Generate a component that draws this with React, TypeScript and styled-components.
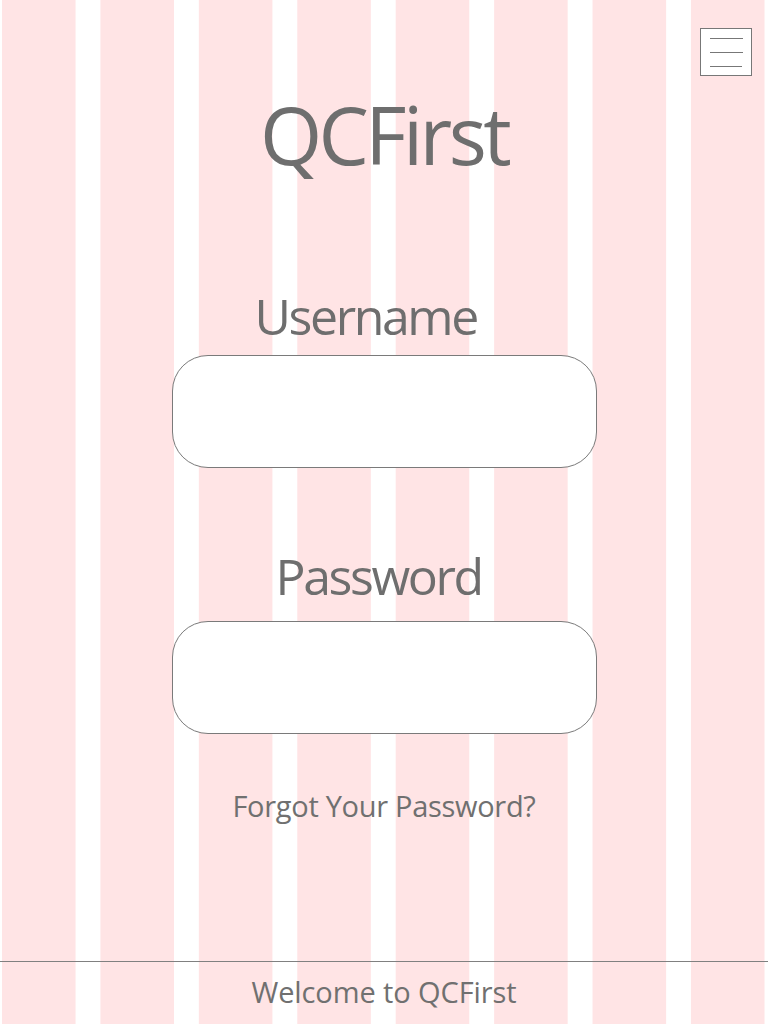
import React from "react";
import styled, { createGlobalStyle } from "styled-components";

const GlobalStyle = createGlobalStyle`
  html, body { margin: 0; padding: 0; }
  body { font-family: "Open Sans", "Noto Sans", sans-serif; color: #707070; }
  * { box-sizing: border-box; }
`;

const Page = styled.div`
  min-height: 1024px;
  display: flex;
  flex-direction: column;
  background-color: #ffffff;
  background-image: linear-gradient(to right, #ffe4e5 0, #ffe4e5 74px, #ffffff 74px, #ffffff 100%);
  background-size: 98.43px 100%;
  background-position: 2px 0;
  background-repeat: repeat-x;
`;

const TopBar = styled.header`
  display: flex;
  justify-content: flex-end;
  padding: 28px 16px 0 0;
`;

const MenuButton = styled.button`
  width: 52px;
  height: 48px;
  padding: 9px 8px 0 9px;
  border: 1px solid #777777;
  background: #ffffff;
  display: flex;
  flex-direction: column;
  gap: 13px;
  cursor: pointer;
`;

const MenuLine = styled.span<{ $w: number }>`
  display: block;
  width: ${(p) => p.$w}px;
  height: 1px;
  background: #777777;
`;

const Title = styled.h1`
  margin: 18px 0 0;
  font-size: 80px;
  line-height: 1;
  font-weight: 400;
  text-align: center;
  letter-spacing: -3.6px;
  color: #6e6e6e;
`;

const Form = styled.form`
  display: flex;
  flex-direction: column;
  width: 425px;
  margin: 0 auto;
`;

const Label = styled.label<{ $indent: number; $top: number }>`
  display: block;
  margin: ${(p) => p.$top}px 0 0 ${(p) => p.$indent}px;
  font-size: 50px;
  line-height: 1;
  letter-spacing: -2.4px;
  color: #6e6e6e;
`;

const Field = styled.input<{ $top: number }>`
  display: block;
  width: 425px;
  height: 113px;
  margin-top: ${(p) => p.$top}px;
  border: 1px solid #7a7a7a;
  border-radius: 36px;
  background: #ffffff;
  outline: none;
  font-family: inherit;
  font-size: 28px;
  padding: 0 28px;
`;

const ForgotLink = styled.a`
  display: block;
  margin-top: 57px;
  font-size: 29px;
  line-height: 1;
  text-align: center;
  color: #707070;
  text-decoration: none;
  letter-spacing: -0.3px;
`;

const Footer = styled.footer`
  margin-top: auto;
  height: 63px;
  border-top: 1px solid #808080;
  padding-top: 15px;
  text-align: center;
  font-size: 29px;
  line-height: 1;
  color: #707070;
  letter-spacing: -0.1px;
`;

export default function App() {
  return (
    <Page>
      <GlobalStyle />
      <TopBar>
        <MenuButton type="button" aria-label="Menu">
          <MenuLine $w={33} />
          <MenuLine $w={33} />
          <MenuLine $w={32} />
        </MenuButton>
      </TopBar>
      <Title>QCFirst</Title>
      <Form onSubmit={(e) => e.preventDefault()}>
        <Label $indent={83} $top={117} htmlFor="username">Username</Label>
        <Field id="username" type="text" $top={14} />
        <Label $indent={104} $top={83} htmlFor="password">Password</Label>
        <Field id="password" type="password" $top={20} />
        <ForgotLink href="#">Forgot Your Password?</ForgotLink>
      </Form>
      <Footer>Welcome to QCFirst</Footer>
    </Page>
  );
}
